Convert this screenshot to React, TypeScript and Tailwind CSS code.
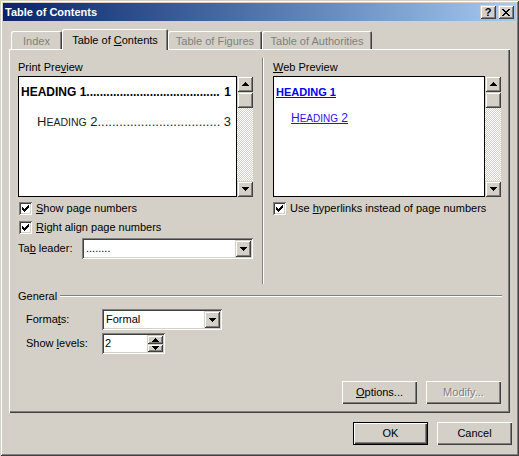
import React from "react";

const raised = "shadow-[inset_1px_1px_#fff,inset_-1px_-1px_#404040,inset_-2px_-2px_#808080]";
const sbRaised =
  "shadow-[inset_1px_1px_#d4d0c8,inset_-1px_-1px_#404040,inset_2px_2px_#fff,inset_-2px_-2px_#808080]";
const sunken =
  "shadow-[inset_1px_1px_#808080,inset_-1px_-1px_#fff,inset_2px_2px_#404040,inset_-2px_-2px_#d4d0c8]";

function Arrow({ up }: { up?: boolean }) {
  return (
    <svg width="7" height="4" viewBox="0 0 7 4" shapeRendering="crispEdges">
      {up ? (
        <>
          <rect x="3" y="0" width="1" height="1" />
          <rect x="2" y="1" width="3" height="1" />
          <rect x="1" y="2" width="5" height="1" />
          <rect x="0" y="3" width="7" height="1" />
        </>
      ) : (
        <>
          <rect x="0" y="0" width="7" height="1" />
          <rect x="1" y="1" width="5" height="1" />
          <rect x="2" y="2" width="3" height="1" />
          <rect x="3" y="3" width="1" height="1" />
        </>
      )}
    </svg>
  );
}

function CheckMark() {
  return (
    <svg width="7" height="7" viewBox="0 0 7 7" shapeRendering="crispEdges">
      <rect x="6" y="0" width="1" height="1" />
      <rect x="5" y="1" width="2" height="1" />
      <rect x="0" y="2" width="1" height="1" />
      <rect x="4" y="2" width="3" height="1" />
      <rect x="0" y="3" width="2" height="1" />
      <rect x="3" y="3" width="3" height="1" />
      <rect x="0" y="4" width="5" height="1" />
      <rect x="1" y="5" width="3" height="1" />
      <rect x="2" y="6" width="1" height="1" />
    </svg>
  );
}

function Check({ children }: { children: React.ReactNode }) {
  return (
    <div className="flex h-[13px] items-center gap-[4px]">
      <div className={`flex h-[13px] w-[13px] items-center justify-center bg-white ${sunken}`}>
        <CheckMark />
      </div>
      <span className="leading-[13px]">{children}</span>
    </div>
  );
}

function ScrollBar() {
  return (
    <div className="flex w-[16px] shrink-0 flex-col">
      <div className={`flex h-[16px] items-center justify-center bg-[#d4d0c8] ${sbRaised}`}>
        <Arrow up />
      </div>
      <div className={`h-[16px] bg-[#d4d0c8] ${sbRaised}`} />
      <div className="flex-1 bg-[repeating-conic-gradient(#fff_0%_25%,#d4d0c8_0%_50%)] bg-[length:2px_2px]" />
      <div className={`flex h-[16px] items-center justify-center bg-[#d4d0c8] ${sbRaised}`}>
        <Arrow />
      </div>
    </div>
  );
}

function Combo({ className, value }: { className: string; value: string }) {
  return (
    <div className={`flex h-[21px] bg-white p-[2px] ${sunken} ${className}`}>
      <span className="flex-1 pl-[2px] leading-[17px]">{value}</span>
      <div className={`flex w-[16px] items-center justify-center bg-[#d4d0c8] ${sbRaised}`}>
        <Arrow />
      </div>
    </div>
  );
}

function Button({
  children,
  disabled,
  def,
}: {
  children: React.ReactNode;
  disabled?: boolean;
  def?: boolean;
}) {
  if (def) {
    return (
      <div className="h-[23px] w-[75px] border border-black">
        <div className={`flex h-full items-center justify-center ${raised}`}>{children}</div>
      </div>
    );
  }
  return (
    <div
      className={`flex h-[23px] w-[75px] items-center justify-center ${raised} ${
        disabled ? "text-[#808080] [text-shadow:1px_1px_0_#fff]" : ""
      }`}
    >
      {children}
    </div>
  );
}

const tab = "shadow-[inset_1px_1px_#fff,inset_-1px_0_#404040,inset_-2px_0_#808080] rounded-t-[2px]";

export default function App() {
  return (
    <div className="flex h-[456px] w-[519px] flex-col bg-[#d4d0c8] p-[3px] font-['Liberation_Sans',Arial,sans-serif] text-[11px] text-black shadow-[inset_1px_1px_#d4d0c8,inset_-1px_-1px_#404040,inset_2px_2px_#fff,inset_-2px_-2px_#808080]">
      {/* title bar */}
      <div className="flex h-[18px] items-center bg-linear-to-r from-[#0a246a] to-[#a6caf0] pl-[2px] pr-[2px]">
        <span className="font-bold text-white">Table of Contents</span>
        <div className="ml-auto flex gap-[2px]">
          <div className={`flex h-[14px] w-[16px] items-center justify-center bg-[#d4d0c8] text-[11px] font-bold leading-none ${sbRaised}`}>
            ?
          </div>
          <div className={`flex h-[14px] w-[16px] items-center justify-center bg-[#d4d0c8] ${sbRaised}`}>
            <svg width="8" height="7" viewBox="0 0 8 7" shapeRendering="crispEdges">
              <path d="M0 0h2v1h1v1h2V1h1V0h2v1H7v1H6v1H5v1h1v1h1v1h1v1H6V6H5V5H3v1H2v1H0V6h1V5h1V4h1V3H2V2H1V1H0z" />
            </svg>
          </div>
        </div>
      </div>

      {/* tabs */}
      <div className="ml-[8px] mt-[8px] flex h-[20px] items-end">
        <div className={`flex h-[18px] w-[51px] items-center justify-center pt-[2px] text-[#808080] ${tab}`}>Index</div>
        <div className={`relative z-10 -mb-px flex h-[21px] w-[106px] items-center justify-center bg-[#d4d0c8] pt-[2px] ${tab}`}>
          <span>
            Table of <u>C</u>ontents
          </span>
        </div>
        <div className={`flex h-[18px] w-[94px] items-center justify-center pt-[2px] text-[#808080] ${tab}`}>Table of Figures</div>
        <div className={`flex h-[18px] w-[110px] items-center justify-center pt-[2px] text-[#808080] ${tab}`}>Table of Authorities</div>
      </div>

      {/* panel */}
      <div className={`ml-[6px] flex h-[364px] w-[501px] flex-col ${raised}`}>
        <div className="flex pl-[9px] pt-[11px]">
          {/* print preview */}
          <div className="flex w-[235px] shrink-0 flex-col">
            <div className="h-[14px] leading-[14px]">
              Print Pre<u>v</u>iew
            </div>
            <div className="mt-[2px] flex h-[121px]">
              <div className="min-w-0 flex-1 border border-black bg-white pl-[2px] pr-[5px] pt-[7px]">
                <div className="flex h-[16px] items-center whitespace-nowrap text-[12px] font-bold leading-[16px]">
                  <span>HEADING 1</span>
                  <span>........................................</span>
                  <span className="ml-auto">1</span>
                </div>
                <div className="mt-[14px] flex h-[16px] items-baseline whitespace-nowrap pl-[16px] leading-[16px] text-[#1c1c1c]">
                  <span className="text-[13px]">H</span>
                  <span className="text-[10.5px]">EADING</span>
                  <span className="text-[13px]">&nbsp;2..................................</span>
                  <span className="ml-auto text-[13px]">3</span>
                </div>
              </div>
              <ScrollBar />
            </div>
            <div className="ml-[1px] mt-[5px] flex flex-col gap-[6px]">
              <Check>
                <u>S</u>how page numbers
              </Check>
              <Check>
                <u>R</u>ight align page numbers
              </Check>
            </div>
            <div className="mt-[4px] flex items-center justify-between">
              <span>
                Ta<u>b</u> leader:
              </span>
              <Combo className="w-[171px]" value="........" />
            </div>
          </div>

          {/* separator */}
          <div className="-mt-[2px] ml-[9px] h-[226px] w-[2px] shrink-0 border-l border-r border-l-[#808080] border-r-white" />

          {/* web preview */}
          <div className="ml-[9px] flex w-[228px] shrink-0 flex-col">
            <div className="h-[14px] leading-[14px]">
              <u>W</u>eb Preview
            </div>
            <div className="mt-[2px] flex h-[121px]">
              <div className="min-w-0 flex-1 border border-black bg-white pl-[2px] pt-[7px]">
                <div className="h-[16px] text-[11px] font-bold leading-[16px] text-[#0000ff] underline">HEADING 1</div>
                <div className="mt-[10px] h-[16px] pl-[15px] leading-[16px] text-[#2b10ff] underline">
                  <span className="text-[12px]">H</span>
                  <span className="text-[10px]">EADING</span>
                  <span className="text-[12px]"> 2</span>
                </div>
              </div>
              <ScrollBar />
            </div>
            <div className="mt-[5px]">
              <Check>
                Use <u>h</u>yperlinks instead of page numbers
              </Check>
            </div>
          </div>
        </div>

        {/* general */}
        <div className="mt-[5px] flex h-[14px] items-center pl-[9px] pr-[8px]">
          <span className="leading-[14px]">General</span>
          <div className="ml-[3px] h-[2px] flex-1 border-b border-t border-b-white border-t-[#808080]" />
        </div>
        <div className="mt-[6px] flex items-center pl-[17px]">
          <span className="w-[76px]">
            Forma<u>t</u>s:
          </span>
          <Combo className="w-[120px]" value="Formal" />
        </div>
        <div className="mt-[3px] flex items-center pl-[17px]">
          <span className="w-[76px]">
            Show <u>l</u>evels:
          </span>
          <div className={`flex h-[21px] w-[63px] bg-white p-[2px] ${sunken}`}>
            <span className="flex-1 pl-[1px] leading-[17px]">2</span>
            <div className="flex w-[16px] flex-col">
              <div className={`flex h-[9px] items-center justify-center bg-[#d4d0c8] ${sbRaised}`}>
                <Arrow up />
              </div>
              <div className={`flex h-[8px] items-center justify-center bg-[#d4d0c8] ${sbRaised}`}>
                <Arrow />
              </div>
            </div>
          </div>
        </div>

        <div className="mt-auto flex justify-end gap-[9px] pb-[9px] pr-[9px]">
          <Button>
            <span>
              <u>O</u>ptions...
            </span>
          </Button>
          <Button disabled>Modify...</Button>
        </div>
      </div>

      <div className="mr-[4px] mt-[9px] flex justify-end gap-[9px]">
        <Button def>OK</Button>
        <Button>Cancel</Button>
      </div>
    </div>
  );
}
